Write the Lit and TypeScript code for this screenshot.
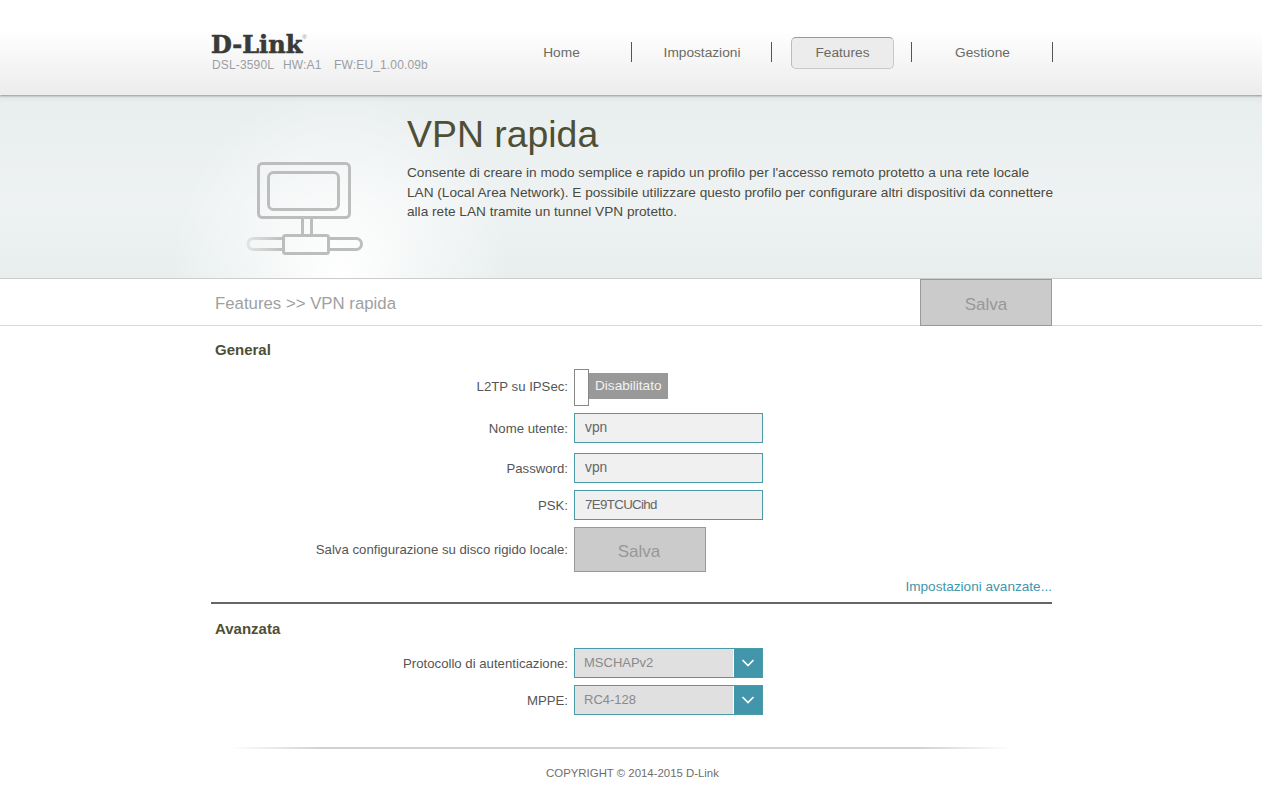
import { LitElement, html, css } from "lit";
import { customElement } from "lit/decorators.js";

@customElement("app-root")
export class AppRoot extends LitElement {
  static styles = css`
    :host { display: block; height: 800px; overflow: hidden; background: #fff; font-family: "Liberation Sans", Arial, sans-serif; color: #4d4d40; font-size: 14px; }
    .wrap { width: 841px; margin-left: 211px; }
    header { height: 95px; box-sizing: border-box; background: linear-gradient(#fff 0, #fff 30px, #ececec 95px); box-shadow: 0 1px 2px rgba(0,0,0,.35); position: relative; z-index: 1; }
    header .wrap { display: flex; justify-content: space-between; height: 95px; }
    .brand { padding-top: 32px; }
    .logo { font-family: "DejaVu Serif", serif; font-weight: 700; font-size: 24px; line-height: 25px; color: #3a3a38; letter-spacing: 0; -webkit-text-stroke: .6px #3a3a38; display: block; height: 26px; }
    .logo sup { font-family: "Liberation Sans", sans-serif; font-size: 6px; font-weight: 400; vertical-align: 14px; line-height: 0; color: #888; letter-spacing: 0; -webkit-text-stroke: 0; }
    .fw { font-size: 12px; line-height: 14px; color: #9a9ea3; display: flex; margin-left: 1px; letter-spacing: .15px; }
    .fw span:nth-child(1) { width: 71px; } .fw span:nth-child(2) { width: 51px; }
    nav { display: flex; padding-top: 37px; height: 32px; margin-right: -1px; }
    .nav-item { width: 140px; height: 32px; display: flex; align-items: center; position: relative; box-sizing: border-box; padding-bottom: 2px; font-size: 13.7px; }
    .nav-item:last-child { width: 141px; }
    .nav-item.first { padding-right: 1px; }
    .nav-item::after { content: ""; position: absolute; right: 0; top: 5px; height: 20px; width: 1px; background: #555; }
    .pill { margin: 2px auto 0; position: relative; left: .5px; width: 103px; height: 32px; box-sizing: border-box; display: flex; align-items: center; justify-content: center; color: #6a6a66; border: 1px solid #c8c8c8; border-top-color: #999; border-left-color: #bbb; border-radius: 5px; background: #ececec; padding-bottom: 2px; }
    .nav-item .label { margin: 0 auto; color: #6a6a66; }
    .banner { height: 184px; box-sizing: border-box; border-bottom: 1px solid #ccc; background: radial-gradient(ellipse 170px 190px at 340px 180px, #fff 0, rgba(255,255,255,0) 100%), linear-gradient(#dfe4e5 0, #e9eeef 8px, #eef2f3 60%, #e8eeee 100%); }
    .banner .wrap { display: flex; }
    .icon { width: 196px; padding-top: 65px; padding-left: 35px; box-sizing: border-box; flex: none; }
    .icon svg { display: block; }
    h1 { font-weight: 400; font-size: 37.4px; line-height: 42px; margin: 0; padding-top: 18px; color: #4f4f36; }
    .intro p { margin: 8px 0 0; line-height: 19.5px; font-size: 13.65px; color: #4a4a40; width: 650px; }
    .crumb { height: 47px; box-sizing: border-box; border-bottom: 1px solid #d8d8d8; }
    .crumb .wrap { display: flex; justify-content: space-between; }
    .crumb-text { color: #a0a0a0; font-size: 16.8px; line-height: 49px; padding-left: 4px; }
    .btn { box-sizing: border-box; background: #cbcbcb; border: 1px solid #999; color: #989898; font-size: 17px; display: flex; align-items: center; justify-content: center; }
    .btn.top { width: 132px; height: 47px; padding-top: 5px; }
    .btn.inline { width: 132px; height: 45px; padding-right: 2px; padding-top: 4px; }
    h2 { font-size: 15px; font-weight: 700; margin: 0; line-height: 18px; color: #4f4f36; padding-left: 4px; }
    h2.g { padding-top: 15px; }
    .row { display: grid; grid-template-columns: 357px auto; column-gap: 6px; align-items: center; }
    .row label { text-align: right; color: #555; font-size: 13.2px; }
    .r1 { margin-top: 7px; height: 40px; }
    .r2 { margin-top: 7px; } .r3 { margin-top: 10px; } .r4 { margin-top: 7px; } .r5 { margin-top: 7px; }
    .toggle { display: flex; align-items: center; }
    .knob { width: 15px; height: 37px; margin-top: 2px; box-sizing: border-box; border: 1px solid #888; background: #fff; }
    .state { width: 79px; height: 26px; background: #999; color: #f2f2f2; font-size: 13.6px; line-height: 26px; padding-left: 6px; box-sizing: border-box; }
    .input { width: 189px; height: 30px; box-sizing: border-box; border: 1px solid #4a9aa8; background: #f0f0f0; color: #666; line-height: 28px; padding-left: 10px; font-size: 13.8px; }
    .input.psk { font-size: 13.3px; letter-spacing: -.65px; }
    .adv { text-align: right; color: #4296ab; line-height: 18px; margin-top: 6px; font-size: 13.6px; }
    .rule { height: 1px; border-top: 2px solid #555; margin-top: 6px; opacity: .9; }
    h2.a { padding-top: 15px; }
    .sel-row1 { margin-top: 10px; } .sel-row2 { margin-top: 7px; }
    .sel { width: 189px; height: 30px; box-sizing: border-box; border: 1px solid #4a9aa8; background: #e0e0e0; color: #8a8a8a; display: flex; justify-content: space-between; line-height: 28px; padding-left: 9px; font-size: 13px; }
    .caret { width: 28px; height: 28px; background: #4296ab; display: flex; align-items: center; justify-content: center; border-left: 1px solid #fff; }
    .foot-line { margin: 32px 0 0 20px; width: 780px; height: 2px; background: linear-gradient(90deg, rgba(190,190,190,0), #d0d0d0 12%, #d0d0d0 88%, rgba(190,190,190,0)); }
    .copy { text-align: center; font-size: 11.4px; color: #6e6e6e; line-height: 14px; margin-top: 17px; width: 753px; margin-left: 45px; }
  `;

  private caret() {
    return html`<span class="caret"><svg width="14" height="8" viewBox="0 0 14 8" fill="none"><path d="M1.500 1 7 6.500 12.500 1" stroke="#fff" stroke-width="1.700"/></svg></span>`;
  }

  render() {
    return html`
      <header>
        <div class="wrap">
          <div class="brand">
            <div class="logo">D-Link<sup>®</sup></div>
            <div class="fw"><span>DSL-3590L</span><span>HW:A1</span><span>FW:EU_1.00.09b</span></div>
          </div>
          <nav>
            <div class="nav-item first"><span class="label">Home</span></div>
            <div class="nav-item"><span class="label">Impostazioni</span></div>
            <div class="nav-item"><span class="pill">Features</span></div>
            <div class="nav-item"><span class="label">Gestione</span></div>
          </nav>
        </div>
      </header>
      <section class="banner">
        <div class="wrap">
          <div class="icon">
            <svg width="118" height="96" viewBox="0 0 118 96" fill="none" stroke="#bdbdbd" stroke-width="3">
              <defs><linearGradient id="fade" gradientUnits="userSpaceOnUse" x1="0" y1="0" x2="37" y2="0"><stop offset="0" stop-color="#e4e4e4"/><stop offset="1" stop-color="#bdbdbd"/></linearGradient></defs>
              <rect x="12.500" y="3.500" width="91" height="54" rx="4" />
              <rect x="22.500" y="12.500" width="70" height="37" rx="5" />
              <path d="M56.500 58v16M65.500 58v16" />
              <rect x="37.500" y="75.500" width="45" height="18" rx="2" />
              <path d="M37 78.500H7.500a5.500 5.500 0 0 0 0 11H37" stroke="url(#fade)" />
              <path d="M83 78.500h27a5.500 5.500 0 0 1 0 11H83" />
            </svg>
          </div>
          <div class="intro">
            <h1>VPN rapida</h1>
            <p>Consente di creare in modo semplice e rapido un profilo per l'accesso remoto protetto a una rete locale LAN (Local Area Network). E possibile utilizzare questo profilo per configurare altri dispositivi da connettere alla rete LAN tramite un tunnel VPN protetto.</p>
          </div>
        </div>
      </section>
      <section class="crumb">
        <div class="wrap">
          <div class="crumb-text">Features &gt;&gt; VPN rapida</div>
          <div class="btn top">Salva</div>
        </div>
      </section>
      <main class="wrap">
        <h2 class="g">General</h2>
        <div class="row r1"><label>L2TP su IPSec:</label><div class="toggle"><span class="knob"></span><span class="state">Disabilitato</span></div></div>
        <div class="row r2"><label>Nome utente:</label><div class="input">vpn</div></div>
        <div class="row r3"><label>Password:</label><div class="input">vpn</div></div>
        <div class="row r4"><label>PSK:</label><div class="input psk">7E9TCUCihd</div></div>
        <div class="row r5"><label>Salva configurazione su disco rigido locale:</label><div class="btn inline">Salva</div></div>
        <div class="adv">Impostazioni avanzate...</div>
        <div class="rule"></div>
        <h2 class="a">Avanzata</h2>
        <div class="row sel-row1"><label>Protocollo di autenticazione:</label><div class="sel">MSCHAPv2${this.caret()}</div></div>
        <div class="row sel-row2"><label>MPPE:</label><div class="sel">RC4-128${this.caret()}</div></div>
        <div class="foot-line"></div>
        <div class="copy">COPYRIGHT © 2014-2015 D-Link</div>
      </main>
    `;
  }
}
